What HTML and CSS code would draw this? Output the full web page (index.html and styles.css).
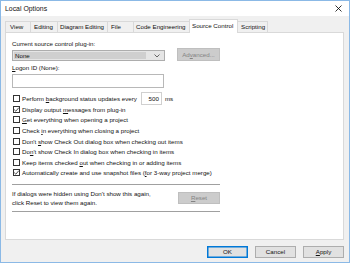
FILE: index.html
```html
<!DOCTYPE html>
<html>
<head>
<meta charset="utf-8">
<link rel="stylesheet" href="styles.css">
</head>
<body>
<div class="win">
  <div class="titlebar">
    <span class="title">Local Options</span>
    <svg class="close" width="7" height="7" viewBox="0 0 7 7"><path d="M0.5 0.5L6.5 6.5M6.5 0.5L0.5 6.5" stroke="#000" stroke-width="0.8"/></svg>
  </div>
  <div class="body">
    <div class="tabs">
      <div class="tab w-view">View</div>
      <div class="tab w-edit">Editing</div>
      <div class="tab w-diag">Diagram Editing</div>
      <div class="tab w-file">File</div>
      <div class="tab w-code">Code Engineering</div>
      <div class="tab sel w-src">Source Control</div>
      <div class="tab w-scr">Scripting</div>
    </div>
    <div class="panel">
      <div class="col">
        <div class="lbl">Current source control plug-in:</div>
        <div class="combo-row">
          <div class="combo"><span class="combo-val">None</span><svg class="arrow" width="6" height="4" viewBox="0 0 6 4"><path d="M0.5 0.5L3 3L5.5 0.5" fill="none" stroke="#444" stroke-width="0.8"/></svg></div>
          <div class="btn dis adv">Ad<u>v</u>anced...</div>
        </div>
        <div class="lbl lbl2"><u>L</u>ogon ID (None):</div>
        <div class="input"></div>
        <div class="checks">
          <div class="chk-row"><span class="cb"></span><span>Perform <u>b</u>ackground status updates every</span><span class="num">500</span><span class="ms">ms</span></div>
          <div class="chk-row"><span class="cb on"><svg width="7" height="7" viewBox="0 0 7 7"><path d="M1.2 3.6L2.8 5.2L5.9 1.6" fill="none" stroke="#222" stroke-width="0.8"/></svg></span><span>Display output <u>m</u>essages from plug-in</span></div>
          <div class="chk-row"><span class="cb"></span><span><u>G</u>et everything when opening a project</span></div>
          <div class="chk-row"><span class="cb"></span><span>Check <u>i</u>n everything when closing a project</span></div>
          <div class="chk-row"><span class="cb"></span><span>Don't <u>s</u>how Check Out dialog box when checking out items</span></div>
          <div class="chk-row"><span class="cb"></span><span>Do<u>n</u>'t show Check In dialog box when checking in items</span></div>
          <div class="chk-row"><span class="cb"></span><span>Keep items checked <u>o</u>ut when checking in or adding items</span></div>
          <div class="chk-row"><span class="cb on"><svg width="7" height="7" viewBox="0 0 7 7"><path d="M1.2 3.6L2.8 5.2L5.9 1.6" fill="none" stroke="#222" stroke-width="0.8"/></svg></span><span>Automatically create and use snapshot files (<u>f</u>or 3-way project merge)</span></div>
        </div>
        <div class="sep sep1"></div>
        <div class="reset-row">
          <div class="info">If dialogs were hidden using Don't show this again,<br>click Reset to view them again.</div>
          <div class="btn dis reset"><u>R</u>eset</div>
        </div>
        <div class="sep sep2"></div>
      </div>
    </div>
    <div class="footer">
      <div class="btn def">OK</div>
      <div class="btn">Cancel</div>
      <div class="btn"><u>A</u>pply</div>
    </div>
  </div>
</div>
</body>
</html>
```

FILE: styles.css
```css
* { box-sizing: border-box; }
html, body { margin: 0; padding: 0; }
body {
  width: 350px;
  height: 263px;
  overflow: hidden;
  font-family: "Liberation Sans", Arial, sans-serif;
  font-size: 6.2px;
  color: #111;
}
u { text-decoration: underline; text-underline-offset: 1px; }
.win {
  width: 350px;
  height: 263px;
  border: 1px solid #8bb9e6;
  background: #f0f0f0;
  display: flex;
  flex-direction: column;
}
.titlebar {
  height: 15px;
  background: #fff;
  display: flex;
  align-items: center;
  justify-content: space-between;
  padding: 0 7px 0 4px;
  flex: none;
}
.title { font-size: 6.9px; }
.close { display: block; }
.body {
  flex: 1;
  padding: 3px 5px 0 4px;
  display: flex;
  flex-direction: column;
}
.tabs {
  height: 13px;
  display: flex;
  align-items: flex-end;
  flex: none;
}
.tab {
  height: 11px;
  line-height: 10px;
  border: 1px solid #d9d9d9;
  border-bottom: none;
  margin-right: -1px;
  padding-left: 4px;
  white-space: nowrap;
  background: #f0f0f0;
}
.tab.sel {
  height: 14px;
  margin-bottom: -1px;
  background: #fff;
  position: relative;
  z-index: 1;
  line-height: 11px;
  padding-left: 2px;
  margin-left: -1px;
  margin-right: -1px;
}
.w-view { width: 26px; }
.w-edit { width: 28px; padding-left: 3px; }
.w-diag { width: 51px; padding-left: 2px; }
.w-file { width: 27px; padding-left: 3px; }
.w-code { width: 58px; padding-left: 2px; }
.w-src { width: 49px; }
.w-scr { width: 31px; padding-left: 3px; }
.panel {
  height: 208px;
  background: #fff;
  border: 1px solid #d9d9d9;
  padding: 7px 0 0 6px;
  flex: none;
}
.col { width: 208px; }
.lbl { line-height: 8px; height: 8px; white-space: nowrap; }
.lbl2 { margin-top: 3px; }
.combo-row {
  display: flex;
  align-items: flex-end;
  justify-content: space-between;
  height: 13px;
}
.combo {
  width: 153px;
  height: 11px;
  background: #e5e5e5;
  border: 1px solid #adadad;
  display: flex;
  align-items: center;
  padding: 0 4px 0 1px;
  justify-content: space-between;
}
.combo-val {
  flex: 1;
  height: 7px;
  line-height: 7px;
  background: #cfcfcf;
  padding-left: 1px;
  margin-right: 8px;
}
.arrow { display: block; }
.btn {
  width: 41px;
  height: 12px;
  line-height: 10px;
  text-align: center;
  background: #e1e1e1;
  border: 1px solid #adadad;
  white-space: nowrap;
}
.btn.dis {
  background: #cccccc;
  border-color: #bfbfbf;
  color: #838383;
}
.btn.adv { width: 43px; height: 13px; line-height: 11px; }
.btn.reset { width: 42px; height: 12px; flex: none; }
.btn.def { border-color: #0078d7; box-shadow: inset 0 0 0 0.5px #0078d7; }
.input {
  margin-top: 2px;
  width: 152px;
  height: 14px;
  border: 1px solid #b8b8b8;
  background: #fff;
}
.checks { margin-top: 5.4px; }
.chk-row {
  height: 10.6px;
  display: flex;
  align-items: center;
  white-space: nowrap;
}
.cb {
  width: 7px;
  height: 7px;
  border: 1px solid #333;
  margin-left: 1px;
  margin-right: 2px;
  flex: none;
  position: relative;
}
.cb svg { position: absolute; left: -1px; top: -1px; }
.num {
  width: 21px;
  height: 13px;
  line-height: 11px;
  border: 1px solid #d0d0d0;
  text-align: right;
  padding-right: 2px;
  margin-left: 4px;
  flex: none;
}
.ms { margin-left: 3px; }
.sep {
  height: 1px;
  background: #a0a0a0;
}
.sep1 { margin-top: 5.6px; }
.reset-row {
  height: 26px;
  display: flex;
  align-items: center;
  justify-content: space-between;
}
.info { line-height: 9px; padding-top: 1px; }
.footer {
  margin-top: 6px;
  display: flex;
  justify-content: flex-end;
  gap: 7px;
}
```
